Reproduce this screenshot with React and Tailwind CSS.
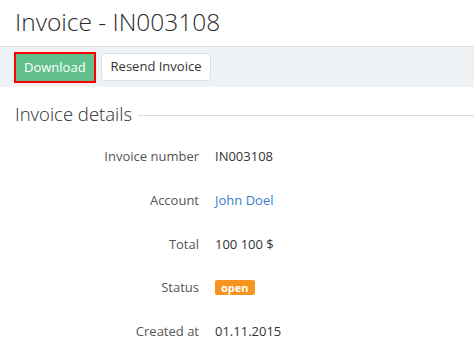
import React from 'react';

const rows = [
  { label: 'Invoice number', value: 'IN003108' },
  { label: 'Account', value: 'John Doel', link: true },
  { label: 'Total', value: '100 100 $' },
  { label: 'Status', badge: 'open' },
  { label: 'Created at', value: '01.11.2015' },
];

const App = () => {
  return (
    <div className="w-[474px] h-[345px] overflow-hidden bg-white text-[#333] font-['Open_Sans',sans-serif]">
      <h1 className="px-[15px] pt-[5px] h-[46px] text-[24.5px] leading-[34px] font-light text-[#2b2b2b]">Invoice - IN003108</h1>
      <div className="h-[41px] bg-[#eff2f5] border-t border-[#dde2e6] flex items-center gap-[5px] pl-[14px]">
        <div className="border-2 border-[#ff0000] p-0">
          <button className="h-[27px] px-[8px] bg-[#62c08c] text-white text-[13px] leading-[27px]">Download</button>
        </div>
        <button className="h-[28px] px-[9px] bg-white border border-[#dcdfe3] rounded-[3px] text-[13px] text-[#333]">Resend Invoice</button>
      </div>
      <div className="flex items-center pt-[13px] pl-[15px]">
        <h2 className="text-[18.5px] leading-[28px] font-light text-[#2b2b2b] pr-[6px]">Invoice details</h2>
        <div className="flex-1 h-px bg-[#d9dde1] mt-[2px]"></div>
      </div>
      <div className="mt-[7px] flex flex-col">
        {rows.map((r) => (
          <div key={r.label} className="flex items-center h-[43.75px] text-[13px]">
            <div className="w-[199px] text-right text-[#555]">{r.label}</div>
            <div className="pl-[16px]">
              {r.badge ? (
                <span className="inline-block bg-[#f7941d] text-white font-bold text-[11px] leading-[15px] px-[6px] rounded-[2px]">{r.badge}</span>
              ) : r.link ? (
                <span className="text-[#3a7fd0]">{r.value}</span>
              ) : (
                <span className="text-[#333]">{r.value}</span>
              )}
            </div>
          </div>
        ))}
      </div>
    </div>
  );
};

export default App;
